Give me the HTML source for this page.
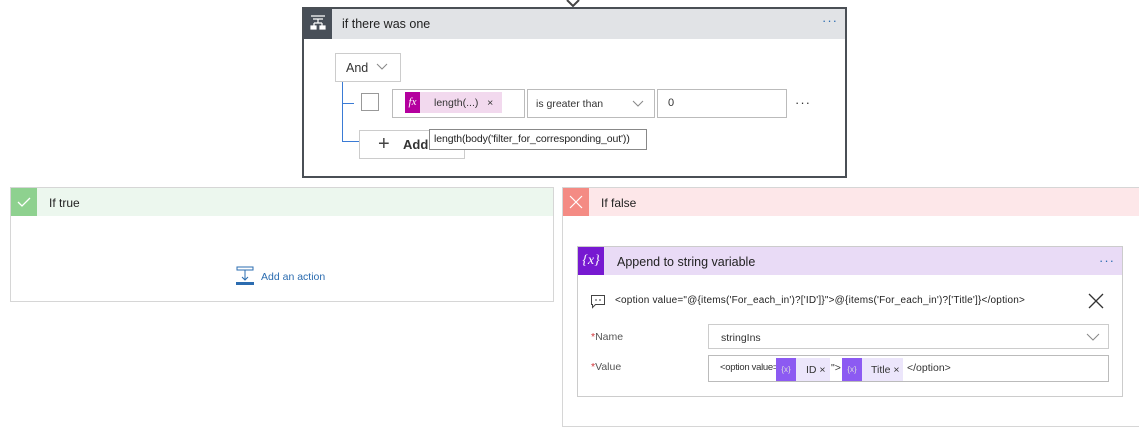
<!DOCTYPE html>
<html><head><style>
*{box-sizing:border-box;margin:0;padding:0}
body{width:1139px;height:412px;background:#fff;position:relative;overflow:hidden;font-family:"Liberation Sans",sans-serif;color:#333;font-size:11px}
.a{position:absolute}
.t{white-space:nowrap}
</style></head><body>
<svg class="a" style="left:565px;top:0" width="16" height="8"><path d="M2 0 L8 6 L14 0" stroke="#444" stroke-width="2" fill="none"/></svg>
<div class="a" style="left:302px;top:7px;width:545px;height:171px;border:2px solid #4a4f55;background:#fff"></div>
<div class="a" style="left:304px;top:9px;width:541px;height:30px;background:#e1e3e6"></div>
<div class="a" style="left:304px;top:9px;width:28px;height:30px;background:#484f58"></div>
<svg class="a" style="left:309px;top:14px" width="18" height="18" fill="none" stroke="#fff" stroke-width="1.2"><path d="M2 2h14M4 5h10M9 5v4M5 9h8M5 9v4M13 9v4"/><rect x="2" y="12" width="5" height="3" fill="#fff"/><rect x="11" y="12" width="5" height="3" fill="#fff"/></svg>
<div class="a t" style="left:342px;top:17px;font-size:12.5px;color:#222">if there was one</div>
<div class="a t" style="left:822px;top:13px;color:#2b6cb0;font-size:13px;letter-spacing:1px">···</div>
<div class="a" style="left:335px;top:53px;width:66px;height:29px;border:1px solid #ccc"></div>
<div class="a t" style="left:346px;top:61px;font-size:12.5px">And</div>
<svg class="a" style="left:376px;top:63px" width="12" height="8"><path d="M1 1l5 5 5-5" stroke="#888" fill="none"/></svg>
<div class="a" style="left:342px;top:82px;width:1px;height:60px;background:#3a7bd5"></div>
<div class="a" style="left:342px;top:103px;width:12px;height:1px;background:#3a7bd5"></div>
<div class="a" style="left:342px;top:141px;width:20px;height:1px;background:#3a7bd5"></div>
<div class="a" style="left:361px;top:93px;width:18px;height:18px;border:1px solid #999"></div>
<div class="a" style="left:392px;top:89px;width:133px;height:29px;border:1px solid #bbb"></div>
<div class="a" style="left:405px;top:92px;width:15px;height:21px;background:#b4009e;color:#fff;font-family:'Liberation Serif',serif;font-style:italic;font-size:11px;text-align:center;line-height:21px">fx</div>
<div class="a t" style="left:420px;top:92px;width:82px;height:21px;background:#f2d9ee;padding-left:14px;line-height:23px;font-size:10.5px">length(...) &nbsp;&nbsp;×</div>
<div class="a" style="left:527px;top:89px;width:128px;height:29px;border:1px solid #bbb"></div>
<div class="a t" style="left:536px;top:98px;font-size:10.5px">is greater than</div>
<svg class="a" style="left:632px;top:100px" width="12" height="8"><path d="M1 1l5 5 5-5" stroke="#888" fill="none"/></svg>
<div class="a" style="left:657px;top:89px;width:130px;height:29px;border:1px solid #bbb"></div>
<div class="a t" style="left:668px;top:97px;font-size:11px">0</div>
<div class="a t" style="left:795px;top:95px;font-size:13px;letter-spacing:1px">···</div>
<div class="a" style="left:359px;top:130px;width:106px;height:29px;border:1px solid #ccc;background:#fff"></div>
<div class="a t" style="left:378px;top:133px;font-size:20px;font-weight:300;color:#444">+</div>
<div class="a t" style="left:403px;top:137px;font-size:13px;font-weight:bold;color:#333">Add</div>
<div class="a t" style="left:429px;top:129px;width:218px;height:21px;border:1px solid #888;background:#fff;font-size:10.5px;line-height:19px;padding-left:4px;color:#222;letter-spacing:-0.1px">length(body('filter_for_corresponding_out'))</div>
<div class="a" style="left:10px;top:187px;width:544px;height:115px;border:1px solid #d6d6d6"></div>
<div class="a" style="left:11px;top:188px;width:542px;height:28px;background:#ecf7ee"></div>
<div class="a" style="left:11px;top:188px;width:26px;height:28px;background:#8ed18f"></div>
<svg class="a" style="left:16px;top:195px" width="16" height="14"><path d="M2 7l4 4 8-8" stroke="#fff" stroke-width="1.3" fill="none"/></svg>
<div class="a t" style="left:49px;top:196px;font-size:12px;color:#222">If true</div>
<svg class="a" style="left:236px;top:266px" width="18" height="20"><rect x="1" y="1" width="16" height="3" fill="none" stroke="#2b6cb0"/><path d="M9 4v10M6 11l3 3 3-3" stroke="#2b6cb0" fill="none"/><rect x="0" y="16" width="18" height="3" fill="#2b6cb0"/></svg>
<div class="a t" style="left:261px;top:271px;font-size:10.5px;color:#2b6cb0">Add an action</div>
<div class="a" style="left:562px;top:187px;width:590px;height:240px;border:1px solid #d6d6d6"></div>
<div class="a" style="left:563px;top:188px;width:576px;height:28px;background:#fde7e9"></div>
<div class="a" style="left:563px;top:188px;width:26px;height:28px;background:#f48b84"></div>
<svg class="a" style="left:568px;top:194px" width="16" height="16"><path d="M2 2l12 12M14 2L2 14" stroke="#fff" stroke-width="1.2"/></svg>
<div class="a t" style="left:601px;top:196px;font-size:12px;color:#222">If false</div>
<div class="a" style="left:577px;top:246px;width:546px;height:151px;border:1px solid #ccc"></div>
<div class="a" style="left:578px;top:247px;width:544px;height:28px;background:#e9dbf6"></div>
<div class="a" style="left:578px;top:247px;width:26px;height:28px;background:#7719d1;color:#fff;font-family:'Liberation Serif',serif;font-style:italic;font-size:14px;text-align:center;line-height:27px">{x}</div>
<div class="a t" style="left:617px;top:255px;font-size:12.5px;color:#222">Append to string variable</div>
<div class="a t" style="left:1099px;top:253px;color:#2b6cb0;font-size:13px;letter-spacing:1px">···</div>
<svg class="a" style="left:590px;top:294px" width="16" height="16"><path d="M1.5 1.5h13v9h-9l-3 3v-3h-1z" stroke="#444" fill="none"/><path d="M6 5v2M10 5v2" stroke="#444"/></svg>
<div class="a t" style="left:615px;top:295px;font-size:10px;color:#222;letter-spacing:0.2px">&lt;option value="@{items('For_each_in')?['ID']}"&gt;@{items('For_each_in')?['Title']}&lt;/option&gt;</div>
<svg class="a" style="left:1088px;top:293px" width="16" height="16"><path d="M1 1l14 14M15 1L1 15" stroke="#333" stroke-width="1.3"/></svg>
<div class="a t" style="left:591px;top:331px;font-size:10.5px;color:#555"><span style="color:#d13438">*</span>Name</div>
<div class="a" style="left:708px;top:324px;width:401px;height:25px;border:1px solid #ccc"></div>
<div class="a t" style="left:721px;top:332px;font-size:10.5px">stringIns</div>
<svg class="a" style="left:1086px;top:333px" width="14" height="8"><path d="M1 1l6 6 6-6" stroke="#888" fill="none"/></svg>
<div class="a t" style="left:591px;top:361px;font-size:10.5px;color:#555"><span style="color:#d13438">*</span>Value</div>
<div class="a" style="left:708px;top:355px;width:401px;height:27px;border:1px solid #bbb"></div>
<div class="a t" style="left:720px;top:362px;font-size:9.5px;letter-spacing:-0.3px">&lt;option value="</div>
<div class="a" style="left:776px;top:358px;width:20px;height:23px;background:#8c5af2;color:#ddd;font-size:8px;text-align:center;line-height:23px">{x}</div>
<div class="a t" style="left:796px;top:358px;width:34px;height:23px;background:#ece6fb;line-height:24px;padding-left:10px;font-size:10.5px">ID ×</div>
<div class="a t" style="left:831px;top:362px;font-size:10.5px">"&gt;</div>
<div class="a" style="left:842px;top:358px;width:20px;height:23px;background:#8c5af2;color:#ddd;font-size:8px;text-align:center;line-height:23px">{x}</div>
<div class="a t" style="left:862px;top:358px;width:41px;height:23px;background:#ece6fb;line-height:24px;padding-left:9px;font-size:10.5px">Title ×</div>
<div class="a t" style="left:907px;top:362px;font-size:10.5px">&lt;/option&gt;</div>
</body></html>
